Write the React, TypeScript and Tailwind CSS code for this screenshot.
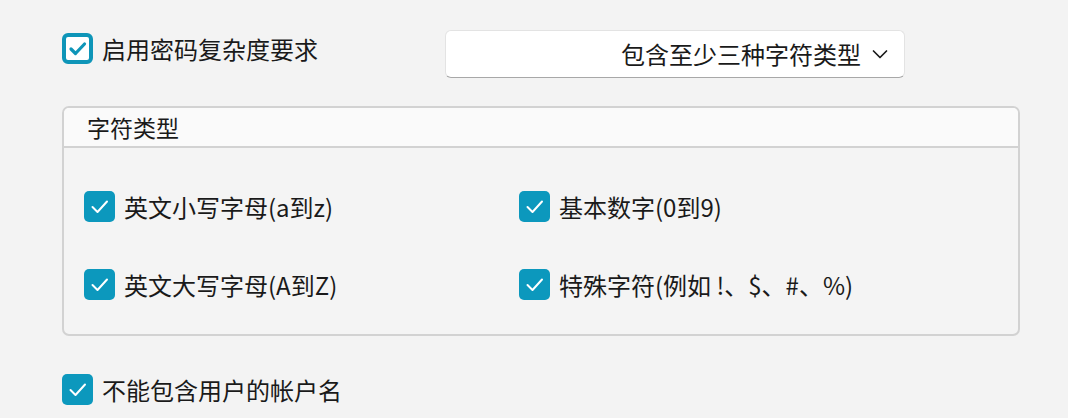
import React from "react";

const font = "font-['Microsoft_YaHei','Noto_Sans_CJK_SC',sans-serif]";

const Box: React.FC<{ focused?: boolean }> = ({ focused }) =>
  focused ? (
    <span className="flex h-[31px] w-[31px] shrink-0 items-center justify-center rounded-[6px] border-[4px] border-[#0e95b8] bg-white">
      <svg width="19" height="19" viewBox="0 0 19 19" fill="none">
        <path d="M3 10l4.5 4.5L16.5 5" stroke="#0e95b8" strokeWidth="3.2" strokeLinecap="round" strokeLinejoin="round" />
      </svg>
    </span>
  ) : (
    <span className="flex h-[31px] w-[31px] shrink-0 items-center justify-center rounded-[5px] bg-[#0c98bd]">
      <svg width="21" height="21" viewBox="0 0 21 21" fill="none">
        <path d="M3.5 11l5 5L18 5.5" stroke="white" strokeWidth="2" strokeLinecap="round" strokeLinejoin="round" />
      </svg>
    </span>
  );

const Check: React.FC<{ label: string; focused?: boolean }> = ({ label, focused }) => (
  <div className="flex items-center gap-[9px]">
    <Box focused={focused} />
    <span className="text-[24px] leading-none text-[#1a1a1a]">{label}</span>
  </div>
);

const App: React.FC = () => {
  return (
    <div className={`h-[418px] w-[1068px] overflow-hidden bg-[#f3f3f3] pl-[62px] pt-[30px] ${font}`}>
      {/* top row */}
      <div className="flex items-start">
        <div className="mt-[3px] w-[383px]">
          <Check label="启用密码复杂度要求" focused />
        </div>
        <div className="flex h-[48px] w-[460px] items-center justify-end rounded-[6px] border border-[#e3e3e3] border-b-[#a8a8a8] bg-white pr-[15px]">
          <span className="text-[24px] leading-none text-[#1a1a1a]">包含至少三种字符类型</span>
          <svg className="ml-[10px]" width="18" height="18" viewBox="0 0 18 18" fill="none">
            <path d="M2.5 6L9 12.5 15.5 6" stroke="#1a1a1a" strokeWidth="1.7" strokeLinecap="round" strokeLinejoin="round" />
          </svg>
        </div>
      </div>

      {/* group */}
      <div className="mt-[28px] h-[230px] w-[958px] overflow-hidden rounded-[7px] border-[2px] border-[#d2d2d2] bg-[#f4f4f4]">
        <div className="flex h-[40px] items-center border-b-[2px] border-[#d2d2d2] bg-[#fafafa] pl-[23px]">
          <span className="text-[23px] leading-none text-[#1a1a1a]">字符类型</span>
        </div>
        <div className="grid grid-cols-[435px_1fr] gap-y-[47px] pl-[20px] pt-[43px]">
          <Check label="英文小写字母(a到z)" />
          <Check label="基本数字(0到9)" />
          <Check label="英文大写字母(A到Z)" />
          <Check label="特殊字符(例如 !、$、#、%)" />
        </div>
      </div>

      {/* bottom */}
      <div className="mt-[38px]">
        <Check label="不能包含用户的帐户名" />
      </div>
    </div>
  );
};

export default App;
